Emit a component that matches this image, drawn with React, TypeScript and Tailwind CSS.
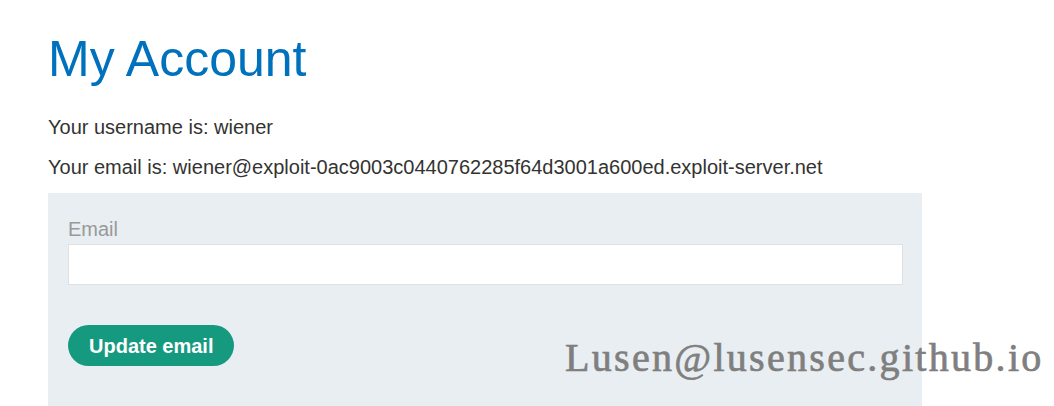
import React from 'react';

export default function App() {
  return (
    <div className="relative w-[1054px] h-[406px] overflow-hidden bg-white font-['Liberation_Sans',Arial,sans-serif] text-[#333332]">
      <div className="pl-[48px] pt-[27px]">
        <h1 className="text-[50px] leading-[64px] text-[#0071bc]">My Account</h1>
        <p className="mt-[24px] text-[20px] leading-[24px]">Your username is: wiener</p>
        <p className="mt-[16px] text-[20px] leading-[24px]">
          Your email is: wiener@exploit-0ac9003c0440762285f64d3001a600ed.exploit-server.net
        </p>
        <form className="mt-[14px] w-[874px] bg-[#e8eef1] px-[20px] pt-[24px] pb-[60px]">
          <label className="block text-[20px] leading-[24px] text-[#999]">Email</label>
          <input
            type="email"
            className="mt-[3px] block w-[835px] h-[41px] bg-white border border-[#e0e0e0] outline-none"
          />
          <button
            type="button"
            className="mt-[40px] h-[41px] px-[21px] rounded-full bg-[#159a7f] text-white font-bold text-[20px]"
          >
            Update email
          </button>
        </form>
      </div>
      <div className="absolute left-[565px] top-[336px] font-['Liberation_Serif',serif] text-[40px] leading-[44px] text-[#7f7f7f] [-webkit-text-stroke:0.7px_#7f7f7f] tracking-[2.3px] whitespace-nowrap">
        Lusen@lusensec.github.io
      </div>
    </div>
  );
}
